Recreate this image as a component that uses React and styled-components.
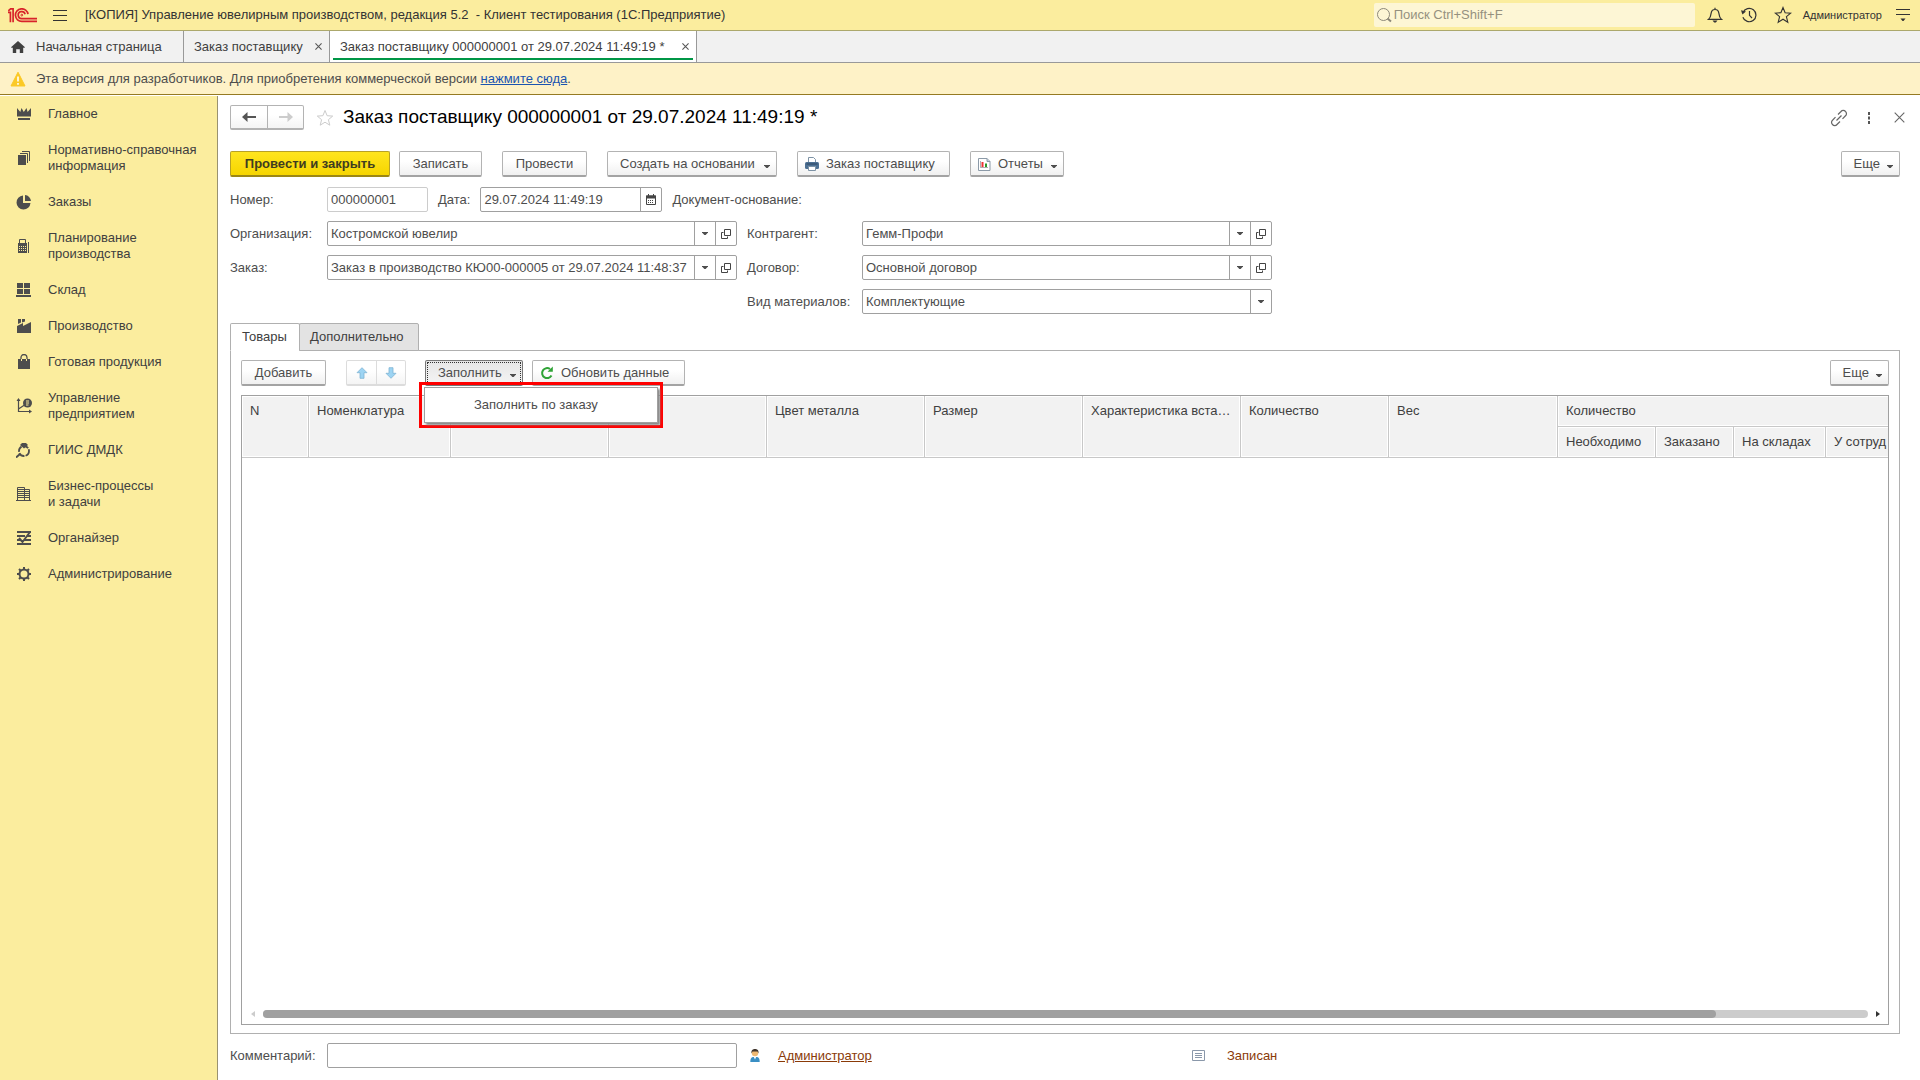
import React from 'react';
import styled, { createGlobalStyle, css } from 'styled-components';

const GlobalStyle = createGlobalStyle`
  * { box-sizing: border-box; }
  body {
    margin: 0;
    background: #fff;
    color: #4d4d4d;
    font: 13px/16px "Liberation Sans", Arial, sans-serif;
  }
  button, input, select { font: inherit; color: inherit; margin: 0; }
  svg { display: block; flex: none; }
`;

const Shell = styled.div`
  min-height: 100vh;
  display: flex;
  flex-direction: column;
`;
const TopBar = styled.header`
  height: 31px;
  display: flex;
  align-items: center;
  padding: 0 10px 0 8px;
  background: #fbed9e;
  border-bottom: 1px solid #aca86c;
  color: #333;
`;
const AppTitle = styled.div`
  flex: 1;
  padding-left: 18px;
  white-space: pre;
`;
const PlainButton = styled.button`
  display: flex;
  align-items: center;
  justify-content: center;
  padding: 0;
  border: 0;
  background: none;
`;
const MenuButton = styled(PlainButton)`
  margin-left: 16px;
`;
const StarButton = styled(PlainButton)`
  margin-left: 12px;
`;
const Search = styled.label`
  flex: 0 1 321px;
  height: 24px;
  display: flex;
  align-items: center;
  gap: 2px;
  padding-left: 2px;
  margin-right: 10px;
  background: #fdf6d5;
  border-radius: 2px;
`;
const SearchInput = styled.input`
  flex: 1;
  min-width: 0;
  padding: 0;
  border: 0;
  background: none;
  outline: none;
  &::placeholder { color: #95917f; opacity: 1; }
`;
const TopTools = styled.div`
  display: flex;
  align-items: center;
  gap: 14px;
  font-size: 11px;
`;
const TopIcons = styled.div`
  display: flex;
  gap: 14px;
  margin-right: -4px;
`;
const IconButton = styled(PlainButton)`
  width: 20px;
  height: 20px;
`;

const WindowTabs = styled.nav`
  height: 32px;
  display: flex;
  background: #f1f1f1;
  border-bottom: 1px solid #999;
  color: #404040;
`;
const WindowTab = styled.div`
  min-width: ${p => p.$width}px;
  display: flex;
  align-items: center;
  justify-content: space-between;
  gap: 8px;
  padding: 0 7px 0 10px;
  border-right: 1px solid #999;
  ${p => p.$active && css`
    background: linear-gradient(#009646, #009646) 3px 27px / calc(100% - 6px) 2px no-repeat #fff;
  `}
`;
const TabLink = styled.a`
  display: flex;
  align-items: center;
  gap: 10px;
  color: inherit;
  text-decoration: none;
`;

const Banner = styled.div`
  height: 32px;
  display: flex;
  align-items: center;
  padding-left: 10px;
  gap: 10px;
  background: #fef2c7;
  border-bottom: 1px solid #957a22;
  a { color: #1a54b0; }
`;

const Body = styled.div`
  flex: 1;
  display: flex;
`;
const Sidebar = styled.nav`
  width: 218px;
  margin-top: 1px;
  background: #fbed9e;
  border-right: 1px solid #999270;
`;
const SideLink = styled.a`
  display: flex;
  align-items: center;
  gap: 16px;
  padding: 10px 12px 10px 16px;
  color: #404040;
  text-decoration: none;
  white-space: pre;
`;
const Main = styled.main`
  flex: 1;
  min-width: 0;
  display: flex;
  flex-direction: column;
  padding: 10px 20px 12px 12px;
`;

const TitleRow = styled.div`
  display: flex;
  align-items: center;
  height: 25px;
  margin-bottom: 21px;
`;
const Heading = styled.h1`
  flex: 1;
  margin: 0 0 0 9px;
  padding-bottom: 2px;
  font-size: 19px;
  line-height: 22px;
  font-weight: 400;
  color: #000;
`;
const Tools = styled.div`
  display: flex;
  gap: 10px;
  margin-right: -9px;
`;

const Bar = styled.div`
  display: flex;
  gap: ${p => p.$gap}px;
`;
const Spacer = styled.div`
  flex: 1;
`;
const Button = styled.button`
  height: 26px;
  min-width: ${p => p.$width}px;
  display: flex;
  align-items: center;
  justify-content: ${p => p.$icon || p.$menu ? 'flex-start' : 'center'};
  gap: 7px;
  padding: 1px ${p => p.$menu ? 6 : 12}px 0 ${p => p.$icon ? 7 : 12}px;
  border: 1px solid #b3b3b3;
  border-bottom: 2px solid #a3a3a3;
  border-radius: 2px;
  background: linear-gradient(#fff 40%, #f0f0f0);
  white-space: nowrap;
  ${p => p.$menu && css`
    svg:last-child { margin: 4px 0 0 auto; }
  `}
  ${p => p.$primary && css`
    border-color: #b8a126;
    border-bottom-color: #9c8714;
    background: linear-gradient(#ffe51f, #f6d500);
    color: #403c20;
    font-weight: 700;
  `}
  ${p => p.$pressed && css`
    border-color: #777;
    background: linear-gradient(#e6e6e6, #f4f4f4);
    outline: 1px dotted #333;
    outline-offset: -3px;
  `}
`;
const ButtonPair = styled.div`
  display: flex;
  height: ${p => p.$height}px;
  border: 1px solid ${p => p.$faint ? '#dcdcdc' : '#b3b3b3'};
  border-bottom-width: 2px;
  border-radius: 2px;
  background: linear-gradient(#fff 40%, #f4f4f4);
  button { width: ${p => p.$cell}px; }
  button + button { border-left: 1px solid ${p => p.$faint ? '#dcdcdc' : '#b3b3b3'}; }
`;

const FieldRow = styled.div`
  display: flex;
  align-items: center;
  height: 25px;
  margin-bottom: 9px;
`;
const NumberRow = styled(FieldRow)`
  gap: 10px;
  margin-top: 10px;
  label:first-child { margin-right: -10px; }
`;
const Label = styled.label`
  flex: none;
  width: ${p => p.$width ? p.$width + 'px' : 'auto'};
  white-space: nowrap;
`;
const Field = styled.div`
  flex: 0 1 ${p => p.$width}px;
  min-width: 0;
  height: 25px;
  display: flex;
  border: 1px solid ${p => p.$faint ? '#ccc' : '#a0a0a0'};
  border-radius: 2px;
  background: #fff;
  overflow: hidden;
`;
const TextInput = styled.input`
  flex: 1;
  min-width: 0;
  padding: 0 3px;
  border: 0;
  background: none;
  outline: none;
`;
const FieldButton = styled(PlainButton)`
  width: 21px;
  border-left: 1px solid #a0a0a0;
`;
// the native select runs under the arrow cell, so a click on the arrow opens it
const SelectBox = styled.div`
  flex: 1;
  min-width: 0;
  display: grid;
  grid-template-columns: minmax(0, 1fr) 21px;
`;
const Select = styled.select`
  grid-area: 1 / 1 / 2 / 3;
  appearance: none;
  min-width: 0;
  padding: 0 24px 0 3px;
  border: 0;
  background: none;
  outline: none;
`;
const Arrow = styled.span`
  grid-area: 1 / 2;
  display: flex;
  align-items: center;
  justify-content: center;
  border-left: 1px solid #a0a0a0;
  pointer-events: none;
`;
const FieldColumns = styled.div`
  display: flex;
  gap: 10px;
`;
const FieldColumn = styled.div`
  flex: 0 1 ${p => p.$width}px;
  min-width: 0;
`;

const PageTabs = styled.div`
  display: flex;
  height: 28px;
  margin-bottom: -1px;
`;
const PageTab = styled.button`
  height: 28px;
  min-width: ${p => p.$width}px;
  padding: 0 10px 1px;
  border: 1px solid #b0b0b0;
  border-radius: 2px 2px 0 0;
  background: #e3e3e3;
  color: #404040;
  text-align: left;
  z-index: 1;
  & + & { margin-left: -1px; }
  ${p => p.$active && css`
    padding-left: 11px;
    background: #fff;
    border-bottom-color: #fff;
  `}
`;
const Panel = styled.section`
  flex: 1;
  display: flex;
  flex-direction: column;
  padding: 9px 10px 8px;
  border: 1px solid #b0b0b0;
`;
const PanelBar = styled.div`
  display: flex;
  margin-bottom: 9px;
`;
const MoveButtons = styled(ButtonPair)`
  margin-left: 20px;
`;
const Dropdown = styled.div`
  position: relative;
  margin: 0 9px 0 19px;
`;
const MenuFrame = styled.div`
  position: absolute;
  z-index: 2;
  top: 22px;
  left: -6px;
  padding: 2px;
  border: 3px solid #f00;
`;
const MenuItem = styled.button`
  display: block;
  width: 234px;
  height: 36px;
  padding: 0 0 0 49px;
  border: 1px solid #a0a0a0;
  background: #fff;
  box-shadow: 2px 2px 2px #888;
  text-align: left;
`;

const TableBox = styled.div`
  flex: 1;
  display: flex;
  flex-direction: column;
  justify-content: space-between;
  border: 1px solid #a0a0a0;
`;
const TableClip = styled.div`
  display: grid;
  overflow: hidden;
`;
const Table = styled.table`
  width: 1756px;
  table-layout: fixed;
  border-spacing: 0;
`;
const HeadCell = styled.th`
  height: 31px;
  padding: 7px 8px 0;
  border-right: 1px solid #c8c8c8;
  border-bottom: 1px solid #c8c8c8;
  box-shadow: inset 0 0 0 1px #fff;
  background: #f2f2f2;
  color: #404040;
  font-weight: 400;
  text-align: left;
  vertical-align: top;
  white-space: nowrap;
  overflow: hidden;
  text-overflow: ellipsis;
`;
const ScrollRow = styled.div`
  display: flex;
  align-items: center;
  gap: 7px;
  padding: 0 8px 6px 9px;
`;
const Track = styled.div`
  flex: 1;
  height: 8px;
  border-radius: 4px;
  background: #ccc;
`;
const Thumb = styled.div`
  width: 90.5%;
  height: 8px;
  border-radius: 4px;
  background: #a0a0a0;
`;

const Footer = styled.footer`
  display: flex;
  align-items: center;
  margin-top: 9px;
  color: #8a3a08;
  a { color: inherit; }
  label { color: #4d4d4d; }
`;
const Author = styled.div`
  flex: 0 1 455px;
  display: flex;
  align-items: center;
  gap: 18px;
  padding-left: 13px;
`;
const Status = styled.div`
  display: flex;
  align-items: center;
  gap: 22px;
`;

const Caret = () => (
  <svg width="6" height="3" viewBox="0 0 6 3"><path d="M0 0h6v.6L3.600 3H2.400L0 .6z" fill="#4d4d4d" /></svg>
);
const Cross = ({ size = 7, color = '#555' }) => (
  <svg width={size} height={size} viewBox="0 0 8 8" stroke={color} fill="none" strokeWidth={size > 8 ? 0.8 : 1.2}>
    <path d="M.5.5l7 7M7.5.5l-7 7" />
  </svg>
);
const Logo = () => (
  <svg width="29" height="15" viewBox="0 0 29 15" fill="none" stroke="#d8232a" strokeWidth="1.7">
    <path d="M0 4.300h2.400v9.900M.3 2.900L2.600.9h2.500v13.300" />
    <path d="M20 6.200A6.300 6.300 0 1 0 14 13.400h15" />
    <path d="M17.100 6.200A3.500 3.500 0 1 0 14 10.600h15" />
    <circle cx="13.800" cy="7.100" r=".9" strokeWidth="1" />
  </svg>
);
const Burger = () => (
  <svg width="14" height="12" viewBox="0 0 14 12" stroke="#333"><path d="M0 1.500h14M0 6.500h14M0 11.500h14" /></svg>
);
const SearchIcon = () => (
  <svg width="16" height="16" viewBox="0 0 16 16" fill="none" stroke="#8d897a">
    <circle cx="7.500" cy="7.500" r="6" /><path d="M11.500 11.500l3.500 3" strokeWidth="2" />
  </svg>
);
const Bell = () => (
  <svg width="16" height="16" viewBox="0 0 16 16" fill="none" stroke="#333" strokeWidth="1.2">
    <path d="M1.500 12.400h13c-2-1.600-2.300-3-2.600-6C11.600 3.800 10 2.500 8 2.500S4.400 3.800 4.100 6.400c-.3 3-.6 4.400-2.600 6zM8 .8v1.700" />
    <path d="M5.500 13.500h5L8.800 15.600H7.200z" fill="#333" stroke="none" />
  </svg>
);
const History = () => (
  <svg width="16" height="16" viewBox="0 0 16 16" fill="none" stroke="#333" strokeWidth="1.2">
    <path d="M2 5.600A6.700 6.700 0 1 1 1.900 10.200M8.500 4v4.300l2.500 2.700" />
    <path d="M0 3.200l5 1.200L1.400 7.600z" fill="#333" stroke="none" />
  </svg>
);
const Star = ({ color = '#333', width = 1.1 }) => (
  <svg width="18" height="18" viewBox="0 0 18 18" fill="none" stroke={color} strokeWidth={width}>
    <path d="M9 1.500l2.100 5.200 5.600.4-4.300 3.600 1.400 5.500L9 13.200l-4.800 3 1.400-5.500L1.300 7.100l5.600-.4z" />
  </svg>
);
const Settings = () => (
  <svg width="14" height="14" viewBox="0 0 14 14"><path d="M0 1.500h14M0 6.500h14" stroke="#333" /><path d="M4.500 10.500h5L7.500 13h-1z" fill="#333" /></svg>
);
const Home = () => (
  <svg width="16" height="14" viewBox="0 0 16 14" fill="#404040">
    <path d="M8 1l7 6.200-1 .9-.8-.6V13H9.800V9.200H6.200V13H2.800V7.500L2 8.100l-1-.9z" />
  </svg>
);
const Warning = () => (
  <svg width="16" height="16" viewBox="0 0 16 16">
    <path d="M8 1.200L15 15H1z" fill="#fbc926" stroke="#fbc926" strokeLinejoin="round" />
    <path d="M8 5.500v5M8 12v1.800" stroke="#fff" strokeWidth="1.6" />
  </svg>
);
const BackArrow = ({ color, flip }) => (
  <svg width="16" height="12" viewBox="0 0 16 12" fill={color}>
    <path d={flip ? 'M15 6L9.500 1v4H1v2h8.500v4z' : 'M1 6l5.500-5v4H15v2H6.500v4z'} />
  </svg>
);
const LinkIcon = () => (
  <svg width="18" height="18" viewBox="0 0 18 18" fill="none" stroke="#666" strokeWidth="1.2">
    <path d="M8 5.500l3-3a2.900 2.900 0 0 1 4.500 0 2.900 2.900 0 0 1 0 4.300l-3 3M10 12.500l-3 3a2.900 2.900 0 0 1-4.500 0 2.900 2.900 0 0 1 0-4.300l3-3M6.500 11.500l5-5" />
  </svg>
);
const Dots = () => (
  <svg width="4" height="12" viewBox="0 0 4 12" fill="#555"><path d="M1 0h2v3H1zM1 4.500h2v3H1zM1 9h2v3H1z" /></svg>
);
const Printer = () => (
  <svg width="14" height="16" viewBox="0 0 14 16">
    <path d="M3.500 7V1.500h5l2 2V7" fill="#fff" stroke="#7d92a5" />
    <rect x="0" y="6" width="14" height="7" rx="1.5" fill="#4d7093" />
    <path d="M1.500 8h11" stroke="#2c4560" />
    <path d="M3.500 10.500h7v4h-7z" fill="#fff" stroke="#7d92a5" />
  </svg>
);
const Report = () => (
  <svg width="13" height="15" viewBox="0 0 13 15">
    <path d="M.5 1.500h8.500l3 3v9H.5z" fill="#fff" stroke="#8c9aa8" />
    <path d="M9 1.500v3h3" fill="#c7d0d8" stroke="#8c9aa8" />
    <path d="M3.500 5h2v5h-2z" fill="#e33" /><path d="M7 6.500h2V10H7z" fill="#2a9a2a" />
    <path d="M2.500 4v6.500H10" stroke="#777" fill="none" strokeWidth=".6" />
  </svg>
);
const Calendar = () => (
  <svg width="10" height="11" viewBox="0 0 10 11">
    <path d="M.5 2h9v8.500h-9z" fill="#fff" stroke="#444" /><path d="M0 1.500h10v3H0zM2 0h1v2H2zM7 0h1v2H7z" fill="#444" />
    <path d="M2 6.500h6M2 8.500h6" stroke="#444" strokeDasharray="1 1" />
  </svg>
);
const OpenIcon = () => (
  <svg width="10" height="10" viewBox="0 0 10 10" fill="none" stroke="#444">
    <path d="M3.500.5h6v6h-6zM2.500 3.500h-2v6h6v-2" />
  </svg>
);
const MoveArrow = ({ down }) => (
  <svg width="12" height="12" viewBox="0 0 12 12" fill="#9dd4f3" stroke="#7fb4d3" strokeWidth=".8">
    <path d={down ? 'M6 11.300L1 6.300h3V.7h4v5.600h3z' : 'M6 .7l5 5H8v5.600H4V5.700H1z'} />
  </svg>
);
const Refresh = () => (
  <svg width="14" height="14" viewBox="0 0 14 14">
    <path d="M11.500 9.500A5 5 0 1 1 10 3" fill="none" stroke="#2fa336" strokeWidth="2" /><path d="M12.800.5v5.300H7.500z" fill="#2fa336" />
  </svg>
);
const Person = () => (
  <svg width="10" height="13" viewBox="0 0 10 13">
    <path d="M.3 13c0-3.500 1-5 3-5h3.400c2 0 3 1.500 3 5z" fill="#3a8fc4" />
    <path d="M3.800 8L5 10.500 6.200 8z" fill="#fff" />
    <circle cx="5" cy="4" r="3.2" fill="#efb973" /><path d="M1.500 4.500C1 1 3 0 5 0s4 1 3.500 4.500L7.500 2.600h-5z" fill="#40352c" />
  </svg>
);
const Note = () => (
  <svg width="13" height="11" viewBox="0 0 13 11" fill="#fff" stroke="#8a98aa">
    <path d="M.5.5h12v10H.5zM3 3.500h7M3 5.500h7M3 7.500h7" />
  </svg>
);
const ScrollArrow = ({ color, right }) => (
  <svg width="5" height="6" viewBox="0 0 5 6"><path d={right ? 'M1 0l4 3-4 3z' : 'M4 0L0 3l4 3z'} fill={color} /></svg>
);

const sideIcons = {
  crown: <path d="M1 2l3.300 4L5.500 2l2.300 4 2.700-4L11.600 6 15 2v8.500H1zM2 12h12v2H2z" />,
  pages: <><path d="M2 5h8v10H2z" /><path d="M4 3.500h7.500V13M6 1.500h7.500V11" fill="none" stroke="#4d4d4d" /></>,
  pie: <><path d="M7 1.500V9h7.500A7 7 0 1 1 7 1.500z" /><path d="M9 1a6.500 6.500 0 0 1 6 6H9z" /></>,
  calc: <><path d="M2 5h9v10H2zM12 4h1v11h-1z" /><path d="M3.500 5V1.500h6V5" fill="none" stroke="#4d4d4d" /><path d="M3 8.500h7M3 10.500h7M3 12.500h7" stroke="#fbed9e" strokeDasharray="1 1" /></>,
  boxes: <path d="M1 1h6v5H1zM8 1h6v5H8zM1 7h6v5H1zM8 7h6v5H8zM0 13h15v2H0z" />,
  factory: <path d="M1 15V8l6-3v3l8-4v11zM2 1h3v3.500L2 6zM6 1h3v2.500L6 4.500z" />,
  bag: <><path d="M2 5h12v10H2z" /><path d="M5 5V3.500a3 3 0 0 1 6 0V5" fill="none" stroke="#4d4d4d" strokeWidth="1.3" /><path d="M5.500 5v2M10.500 5v2" stroke="#fbed9e" /></>,
  chart: <><path d="M2.500 1v12.500H15M2.500 11l6-4" fill="none" stroke="#4d4d4d" strokeWidth="1.2" /><path d="M2.500 0l2 3h-4zM16 13.500l-3-2v4z" /><circle cx="11.500" cy="5" r="4.5" /><path d="M10 3h3M10 5h3M10 7h2.500" stroke="#fbed9e" /></>,
  ring: <><circle cx="8" cy="9" r="5" fill="none" stroke="#4d4d4d" strokeWidth="1.8" strokeDasharray="6 1.2" /><path d="M6 1h4l2 2-4 3.500L4 3z" /><path d="M0 15.500l4-3.500" stroke="#4d4d4d" strokeWidth="2" /></>,
  building: <><path d="M1.500 14.500v-13h7v13M8.500 3.500h5v11M0 14.500h15" fill="none" stroke="#4d4d4d" /><path d="M2 3.500h6M2 5.500h6M2 7.500h6M2 9.500h6M2 11.500h6M9 5.500h4M9 7.500h4M9 9.500h4M9 11.500h4" stroke="#4d4d4d" /></>,
  tasks: <path d="M1 2h14M1 6h8M12 6h3M1 10h4M9 10h6M1 14h14M3 8l3.500 4L14 2" fill="none" stroke="#4d4d4d" strokeWidth="2" />,
  gear: <><circle cx="8" cy="8" r="4.5" fill="none" stroke="#4d4d4d" strokeWidth="2" /><path d="M8 1v2.500M8 12.500V15M1 8h2.500M12.500 8H15M3 3l2 2M11 11l2 2M13 3l-2 2M5 11l-2 2" stroke="#4d4d4d" strokeWidth="2" /></>,
};

const sections = [
  ['crown', 'Главное'],
  ['pages', 'Нормативно-справочная\nинформация'],
  ['pie', 'Заказы'],
  ['calc', 'Планирование\nпроизводства'],
  ['boxes', 'Склад'],
  ['factory', 'Производство'],
  ['bag', 'Готовая продукция'],
  ['chart', 'Управление\nпредприятием'],
  ['ring', 'ГИИС ДМДК'],
  ['building', 'Бизнес-процессы\nи задачи'],
  ['tasks', 'Органайзер'],
  ['gear', 'Администрирование'],
];

const columns = [
  { title: 'N', width: 67 },
  { title: 'Номенклатура', width: 142 },
  { title: '', width: 158 },
  { title: '', width: 158 },
  { title: 'Цвет металла', width: 158 },
  { title: 'Размер', width: 158 },
  { title: 'Характеристика вставки', width: 158 },
  { title: 'Количество', width: 148 },
  { title: 'Вес', width: 169 },
];
const amounts = [
  { title: 'Необходимо', width: 98 },
  { title: 'Заказано', width: 78 },
  { title: 'На складах', width: 92 },
  { title: 'У сотруд', width: 172 },
];

const ChoiceField = ({ id, label, labelWidth, value, open }) => (
  <FieldRow>
    <Label htmlFor={id} $width={labelWidth}>{label}</Label>
    <Field $width={410}>
      <SelectBox>
        <Select id={id}><option>{value}</option></Select>
        <Arrow><Caret /></Arrow>
      </SelectBox>
      {open && <FieldButton aria-label="Открыть"><OpenIcon /></FieldButton>}
    </Field>
  </FieldRow>
);

const ItemsTable = () => (
  <TableBox>
    <TableClip>
      <Table>
        <colgroup>
          {[...columns, ...amounts].map((c, i) => <col key={i} width={c.width} />)}
        </colgroup>
        <thead>
          <tr>
            {columns.map((c, i) => <HeadCell key={i} rowSpan={2}>{c.title}</HeadCell>)}
            <HeadCell colSpan={amounts.length}>Количество</HeadCell>
          </tr>
          <tr>
            {amounts.map(c => <HeadCell key={c.title}>{c.title}</HeadCell>)}
          </tr>
        </thead>
        <tbody />
      </Table>
    </TableClip>
    <ScrollRow>
      <ScrollArrow color="#ccc" />
      <Track><Thumb /></Track>
      <ScrollArrow color="#333" right />
    </ScrollRow>
  </TableBox>
);

const App = () => (
  <Shell>
    <GlobalStyle />
    <TopBar>
      <Logo />
      <MenuButton aria-label="Меню"><Burger /></MenuButton>
      <AppTitle>{'[КОПИЯ] Управление ювелирным производством, редакция 5.2  - Клиент тестирования (1С:Предприятие)'}</AppTitle>
      <Search>
        <SearchIcon />
        <SearchInput type="search" placeholder="Поиск Ctrl+Shift+F" />
      </Search>
      <TopTools>
        <TopIcons>
          <IconButton aria-label="Уведомления"><Bell /></IconButton>
          <IconButton aria-label="История"><History /></IconButton>
          <IconButton aria-label="Избранное"><Star /></IconButton>
        </TopIcons>
        <span>Администратор</span>
        <PlainButton aria-label="Настройки"><Settings /></PlainButton>
      </TopTools>
    </TopBar>

    <WindowTabs>
      <WindowTab $width={184}><TabLink href="#"><Home />Начальная страница</TabLink></WindowTab>
      <WindowTab $width={146}>
        <TabLink href="#">Заказ поставщику</TabLink>
        <PlainButton aria-label="Закрыть"><Cross /></PlainButton>
      </WindowTab>
      <WindowTab $width={367} $active>
        <TabLink href="#">Заказ поставщику 000000001 от 29.07.2024 11:49:19 *</TabLink>
        <PlainButton aria-label="Закрыть"><Cross /></PlainButton>
      </WindowTab>
    </WindowTabs>

    <Banner>
      <Warning />
      <span>Эта версия для разработчиков. Для приобретения коммерческой версии <a href="#">нажмите сюда</a>.</span>
    </Banner>

    <Body>
      <Sidebar>
        {sections.map(([icon, title]) => (
          <SideLink href="#" key={icon}>
            <svg width="16" height="16" viewBox="0 0 16 16" fill="#4d4d4d">{sideIcons[icon]}</svg>
            {title}
          </SideLink>
        ))}
      </Sidebar>

      <Main>
        <TitleRow>
          <ButtonPair $height={25} $cell={36}>
            <PlainButton aria-label="Назад"><BackArrow color="#555" /></PlainButton>
            <PlainButton aria-label="Вперед"><BackArrow color="#ccc" flip /></PlainButton>
          </ButtonPair>
          <StarButton aria-label="В избранное"><Star color="#ccc" width={1} /></StarButton>
          <Heading>Заказ поставщику 000000001 от 29.07.2024 11:49:19 *</Heading>
          <Tools>
            <IconButton aria-label="Ссылка"><LinkIcon /></IconButton>
            <IconButton aria-label="Еще"><Dots /></IconButton>
            <IconButton aria-label="Закрыть"><Cross size={11} color="#666" /></IconButton>
          </Tools>
        </TitleRow>

        <Bar $gap={20}>
          <Bar $gap={9}>
            <Button $width={160} $primary>Провести и закрыть</Button>
            <Button $width={83}>Записать</Button>
          </Bar>
          <Button $width={85}>Провести</Button>
          <Button $width={170} $menu>Создать на основании<Caret /></Button>
          <Button $width={153} $icon><Printer />Заказ поставщику</Button>
          <Button $width={94} $icon $menu><Report />Отчеты<Caret /></Button>
          <Spacer />
          <Button $width={59} $menu>Еще<Caret /></Button>
        </Bar>

        <NumberRow>
          <Label htmlFor="number" $width={97}>Номер:</Label>
          <Field $width={101} $faint><TextInput id="number" defaultValue="000000001" /></Field>
          <Label htmlFor="date">Дата:</Label>
          <Field $width={182}>
            <TextInput id="date" defaultValue="29.07.2024 11:49:19" />
            <FieldButton aria-label="Календарь"><Calendar /></FieldButton>
          </Field>
          <span>Документ-основание:</span>
        </NumberRow>
        <FieldColumns>
          <FieldColumn $width={507}>
            <ChoiceField id="org" label="Организация:" labelWidth={97} value="Костромской ювелир" open />
            <ChoiceField id="order" label="Заказ:" labelWidth={97} value="Заказ в производство КЮ00-000005 от 29.07.2024 11:48:37" open />
          </FieldColumn>
          <FieldColumn $width={525}>
            <ChoiceField id="partner" label="Контрагент:" labelWidth={115} value="Гемм-Профи" open />
            <ChoiceField id="contract" label="Договор:" labelWidth={115} value="Основной договор" open />
            <ChoiceField id="kind" label="Вид материалов:" labelWidth={115} value="Комплектующие" />
          </FieldColumn>
        </FieldColumns>

        <PageTabs>
          <PageTab $width={70} $active>Товары</PageTab>
          <PageTab $width={120}>Дополнительно</PageTab>
        </PageTabs>
        <Panel>
          <PanelBar>
            <Button $width={85}>Добавить</Button>
            <MoveButtons $height={26} $cell={29} $faint>
              <PlainButton aria-label="Вверх"><MoveArrow /></PlainButton>
              <PlainButton aria-label="Вниз"><MoveArrow down /></PlainButton>
            </MoveButtons>
            <Dropdown>
              <Button $width={98} $menu $pressed>Заполнить<Caret /></Button>
              <MenuFrame><MenuItem>Заполнить по заказу</MenuItem></MenuFrame>
            </Dropdown>
            <Button $width={153} $icon><Refresh />Обновить данные</Button>
            <Spacer />
            <Button $width={59} $menu>Еще<Caret /></Button>
          </PanelBar>
          <ItemsTable />
        </Panel>

        <Footer>
          <Label htmlFor="comment" $width={97}>Комментарий:</Label>
          <Field $width={410}><TextInput id="comment" /></Field>
          <Author><Person /><a href="#">Администратор</a></Author>
          <Status><Note />Записан</Status>
        </Footer>
      </Main>
    </Body>
  </Shell>
);

export default App;
